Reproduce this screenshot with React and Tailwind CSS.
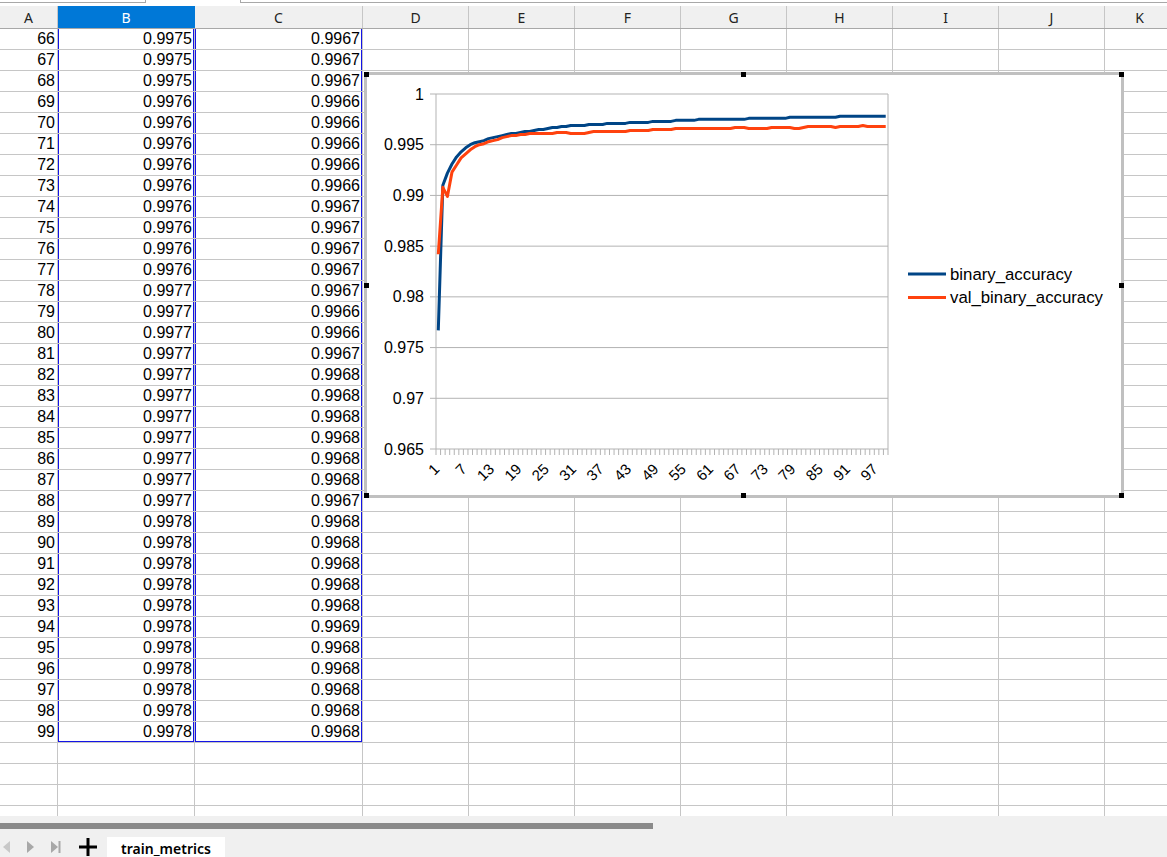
import React from "react";

const COLS = [
  { key: "A", w: "w-[58px]" },
  { key: "B", w: "w-[137px]" },
  { key: "C", w: "w-[168px]" },
  { key: "D", w: "w-[106px]" },
  { key: "E", w: "w-[106px]" },
  { key: "F", w: "w-[106px]" },
  { key: "G", w: "w-[106px]" },
  { key: "H", w: "w-[106px]" },
  { key: "I", w: "w-[106px]" },
  { key: "J", w: "w-[106px]" },
  { key: "K", w: "w-[70px]" },
];

const B_TAIL = [
  0.9975, 0.9975, 0.9975, 0.9976, 0.9976, 0.9976, 0.9976, 0.9976, 0.9976, 0.9976, 0.9976, 0.9976,
  0.9977, 0.9977, 0.9977, 0.9977, 0.9977, 0.9977, 0.9977, 0.9977, 0.9977, 0.9977, 0.9977,
  0.9978, 0.9978, 0.9978, 0.9978, 0.9978, 0.9978, 0.9978, 0.9978, 0.9978, 0.9978, 0.9978,
];

const C_TAIL = [
  0.9967, 0.9967, 0.9967, 0.9966, 0.9966, 0.9966, 0.9966, 0.9966, 0.9967, 0.9967, 0.9967, 0.9967,
  0.9967, 0.9966, 0.9966, 0.9967, 0.9968, 0.9968, 0.9968, 0.9968, 0.9968, 0.9968, 0.9967,
  0.9968, 0.9968, 0.9968, 0.9968, 0.9968, 0.9969, 0.9968, 0.9968, 0.9968, 0.9968, 0.9968,
];

const B_KEYS = [
  [1, 0.9767], [2, 0.991], [3, 0.9922], [4, 0.9931], [5, 0.9938], [6, 0.9943], [7, 0.9947],
  [8, 0.995], [10, 0.9953], [13, 0.9957], [16, 0.996], [19, 0.9962], [25, 0.9966], [28, 0.9968],
  [35, 0.997], [40, 0.9971], [45, 0.9972], [50, 0.9973], [55, 0.9974], [60, 0.9975], [65, 0.9975],
];

const C_KEYS = [
  [1, 0.9842], [2, 0.9908], [3, 0.9899], [4, 0.9923], [5, 0.993], [6, 0.9937], [7, 0.9941],
  [8, 0.9945], [10, 0.995], [13, 0.9954], [16, 0.9958], [19, 0.996], [22, 0.9961], [26, 0.9961],
  [28, 0.9962], [30, 0.9961], [33, 0.9961], [35, 0.9963], [40, 0.9963], [45, 0.9964],
  [50, 0.9965], [55, 0.9966], [60, 0.9966], [65, 0.9966],
];

function expand(keys, tail) {
  const out = [];
  for (let n = 1; n <= 65; n++) {
    let i = 0;
    while (i < keys.length - 1 && keys[i + 1][0] < n) i++;
    const [n0, v0] = keys[i];
    const [n1, v1] = keys[Math.min(i + 1, keys.length - 1)];
    const v = n1 === n0 ? v0 : v0 + ((v1 - v0) * (n - n0)) / (n1 - n0);
    out.push(Math.round(v * 10000) / 10000);
  }
  return out.concat(tail);
}

const binary = expand(B_KEYS, B_TAIL);
const valBinary = expand(C_KEYS, C_TAIL);

// chart coords, relative to the inside of the chart frame (page 367,75)
const X0 = 69;
const X1 = 521;
const YT = 19;
const YB = 374;
const STEP = (X1 - X0) / 99;
const px = (n) => X0 + (n - 0.5) * STEP;
const py = (v) => YT + ((1 - v) / 0.035) * (YB - YT);
const toPath = (arr) => arr.map((v, i) => `${i ? "L" : "M"}${px(i + 1).toFixed(2)},${py(v).toFixed(2)}`).join(" ");

const Y_LABELS = ["1", "0.995", "0.99", "0.985", "0.98", "0.975", "0.97", "0.965"];
const X_LABELS = [];
for (let n = 1; n <= 97; n += 6) X_LABELS.push(n);

function Chart() {
  return (
    <div className="absolute left-[364px] top-[72px] w-[760px] h-[426px] border-[3px] border-[#c0c0c0] bg-white">
      <svg width="754" height="420" className="block" style={{ fontFamily: "'Liberation Sans', Arial, sans-serif" }}>
        {Y_LABELS.map((t, k) => {
          const y = YT + (k * (YB - YT)) / 7;
          return (
            <g key={t}>
              <line x1={X0 - 6} y1={y} x2={X1} y2={y} stroke="#b3b3b3" strokeWidth="1" />
              <text x="57" y={y + 5.5} textAnchor="end" fontSize="16" fill="#000">{t}</text>
            </g>
          );
        })}
        <line x1={X0} y1={YT} x2={X0} y2={YB} stroke="#b3b3b3" strokeWidth="1" />
        <line x1={X1} y1={YT} x2={X1} y2={YB} stroke="#b3b3b3" strokeWidth="1" />
        {Array.from({ length: 100 }, (_, i) => (
          <line key={i} x1={X0 + i * STEP} y1={YB} x2={X0 + i * STEP} y2={YB + 6} stroke="#b3b3b3" strokeWidth="1" />
        ))}
        {X_LABELS.map((n) => {
          const x = px(n) + 2;
          const y = 395;
          return (
            <text key={n} x={x} y={y} textAnchor="end" fontSize="15" fill="#000" transform={`rotate(-45 ${x} ${y})`}>
              {n}
            </text>
          );
        })}
        <path d={toPath(binary)} fill="none" stroke="#004586" strokeWidth="3" strokeLinejoin="round" />
        <path d={toPath(valBinary)} fill="none" stroke="#ff420e" strokeWidth="3" strokeLinejoin="round" />
        <line x1="541" y1="199" x2="579" y2="199" stroke="#004586" strokeWidth="3" />
        <text x="583" y="204.5" fontSize="16.8" fill="#000">binary_accuracy</text>
        <line x1="541" y1="222.5" x2="579" y2="222.5" stroke="#ff420e" strokeWidth="3" />
        <text x="583" y="228" fontSize="16.8" fill="#000">val_binary_accuracy</text>
      </svg>
    </div>
  );
}

function Handles() {
  return (
    <>
      <div className="absolute left-[364px] top-[72px] w-[5px] h-[5px] bg-black" />
      <div className="absolute left-[741px] top-[72px] w-[5px] h-[5px] bg-black" />
      <div className="absolute left-[1119px] top-[72px] w-[5px] h-[5px] bg-black" />
      <div className="absolute left-[364px] top-[283px] w-[5px] h-[5px] bg-black" />
      <div className="absolute left-[1119px] top-[283px] w-[5px] h-[5px] bg-black" />
      <div className="absolute left-[364px] top-[493px] w-[5px] h-[5px] bg-black" />
      <div className="absolute left-[741px] top-[493px] w-[5px] h-[5px] bg-black" />
      <div className="absolute left-[1119px] top-[493px] w-[5px] h-[5px] bg-black" />
    </>
  );
}

function Row({ n, idx }) {
  const has = n <= 99;
  const last = n === 99;
  return (
    <div className="flex h-[21px] shrink-0">
      {COLS.map((c, ci) => {
        let inner = null;
        if (has && ci === 0) {
          inner = <div className="h-full text-right pr-[2px]">{n}</div>;
        } else if (has && (ci === 1 || ci === 2)) {
          const v = ci === 1 ? B_TAIL[idx] : C_TAIL[idx];
          inner = (
            <div className={`h-full text-right pr-[1px] border-x border-[#1414e6] ${last ? "border-b" : ""}`}>
              {v.toFixed(4)}
            </div>
          );
        }
        return (
          <div key={c.key} className={`${c.w} shrink-0 h-full border-r border-b border-[#c6c6c6] leading-[20px] text-[16px] text-black`}>
            {inner}
          </div>
        );
      })}
    </div>
  );
}

function Arrow({ dir, color, bar }) {
  return (
    <svg width="12" height="14" viewBox="0 0 12 14">
      {dir === "left" ? (
        <polygon points="9,1 9,13 2,7" fill={color} />
      ) : (
        <polygon points="2,1 2,13 9,7" fill={color} />
      )}
      {bar ? <rect x="9.5" y="1" width="2" height="12" fill={color} /> : null}
    </svg>
  );
}

export default function App() {
  const rows = [];
  for (let n = 66; n <= 103; n++) rows.push(n);

  return (
    <div className="relative w-[1167px] h-[857px] overflow-hidden bg-white" style={{ fontFamily: "'Liberation Sans', Arial, sans-serif" }}>
      {/* toolbar remains */}
      <div className="h-[6px] flex bg-white">
        <div className="w-[146px] h-[3px] border-r border-b border-[#a8a8a8]" />
        <div className="w-[94px]" />
        <div className="flex-1 h-[3px] border-l border-b border-[#a8a8a8]" />
      </div>

      {/* column headers */}
      <div className="flex h-[23px] bg-[#f0f0f0] border-b border-[#a8a8a8]">
        {COLS.map((c) => (
          <div
            key={c.key}
            className={`${c.w} shrink-0 h-full flex items-center justify-center text-[14px] border-r ${
              c.key === "B" ? "bg-[#0078d7] text-white border-[#0078d7]" : "text-[#222] border-[#c6c6c6]"
            }`}
            style={{ fontFamily: "'Noto Sans', sans-serif" }}
          >
            {c.key}
          </div>
        ))}
      </div>

      {/* cells */}
      <div className="h-[787px] overflow-hidden flex flex-col">
        {rows.map((n, i) => (
          <Row key={n} n={n} idx={i} />
        ))}
      </div>

      {/* bottom bar */}
      <div className="h-[41px] bg-[#f0f0f0] flex flex-col">
        <div className="mt-[7px] w-[653px] h-[6px] bg-[#8a8a8a]" />
        <div className="mt-[8px] flex items-end h-[20px]">
          <div className="flex items-center gap-[12px] pl-[1px] h-[20px]">
            <Arrow dir="left" color="#c8c8c8" />
            <Arrow dir="right" color="#a8a8a8" />
            <Arrow dir="right" color="#a8a8a8" bar />
          </div>
          <div className="ml-[18px] h-[20px] flex items-center">
            <svg width="18" height="18" viewBox="0 0 18 18">
              <rect x="0" y="7.5" width="18" height="3" fill="#000" />
              <rect x="7.5" y="0" width="3" height="18" fill="#000" />
            </svg>
          </div>
          <div
            className="ml-[10px] w-[118px] h-[20px] bg-white flex items-center justify-center text-[14px] font-semibold text-black pt-[3px]"
            style={{ fontFamily: "'Noto Sans', sans-serif" }}
          >
            train_metrics
          </div>
        </div>
      </div>

      <Chart />
      <Handles />
    </div>
  );
}
